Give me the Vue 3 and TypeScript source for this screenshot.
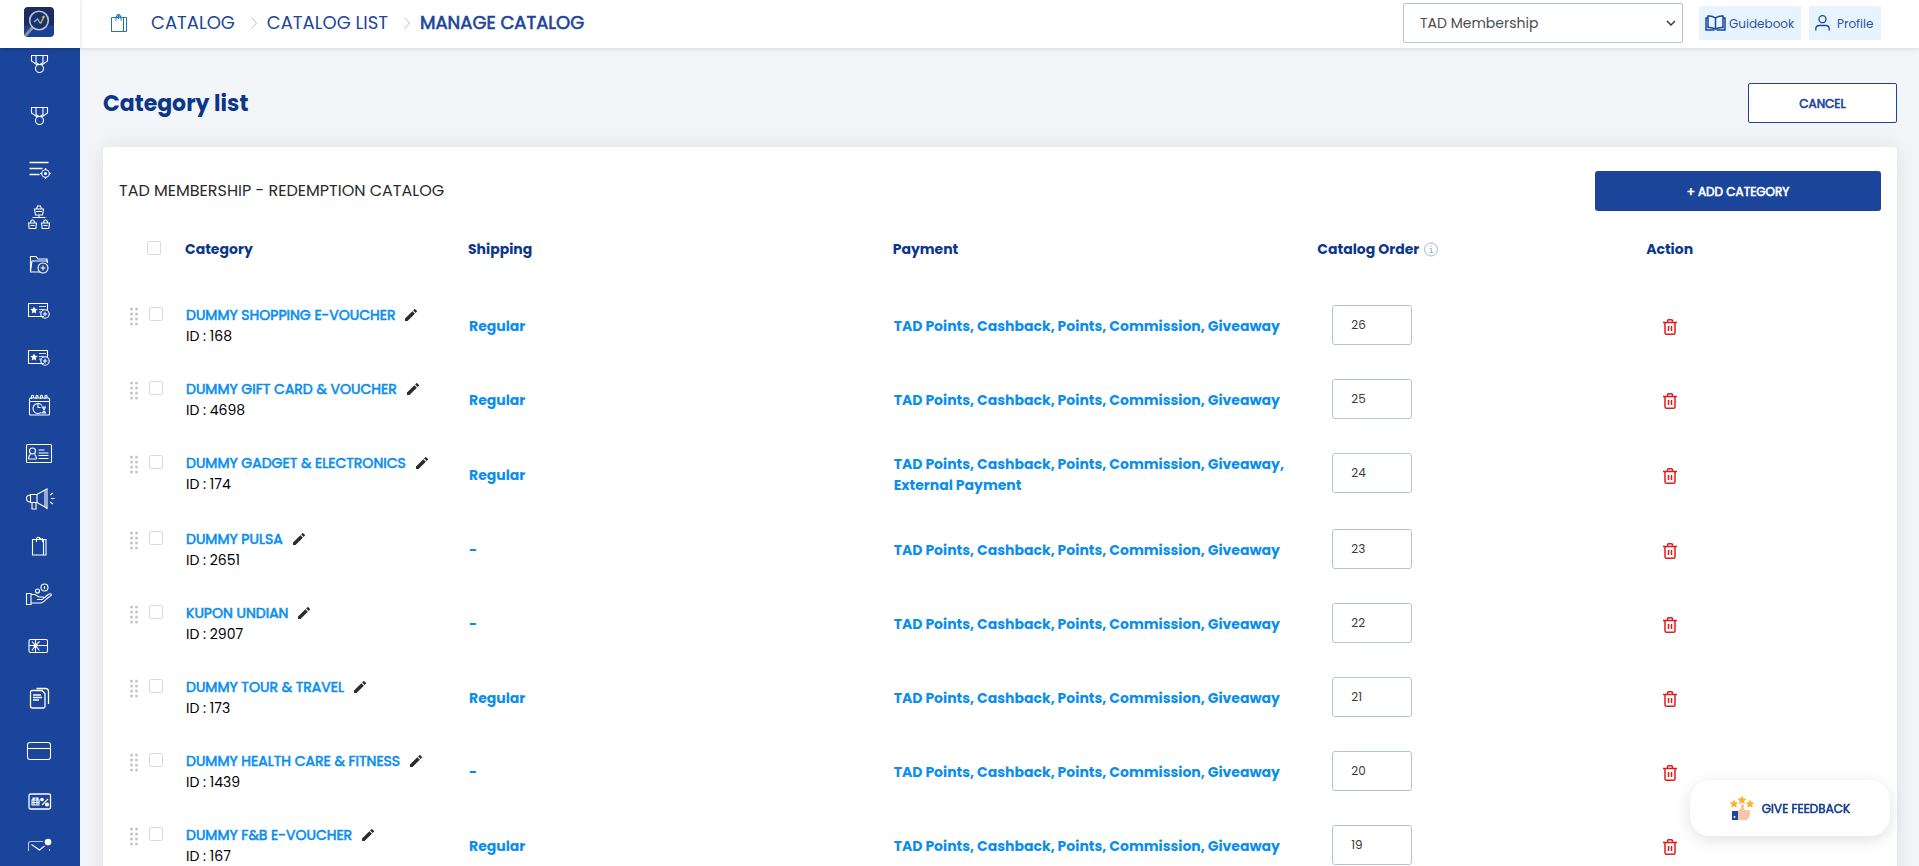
<script setup lang="ts">
import { ref } from 'vue'

interface Category {
  id: number
  name: string
  shipping: string
  payment: string
  order: number
}

const base = 'TAD Points, Cashback, Points, Commission, Giveaway'

const categories = ref<Category[]>([
  { id: 168, name: 'DUMMY SHOPPING E-VOUCHER', shipping: 'Regular', payment: base, order: 26 },
  { id: 4698, name: 'DUMMY GIFT CARD & VOUCHER', shipping: 'Regular', payment: base, order: 25 },
  { id: 174, name: 'DUMMY GADGET & ELECTRONICS', shipping: 'Regular', payment: base + ', External Payment', order: 24 },
  { id: 2651, name: 'DUMMY PULSA', shipping: '-', payment: base, order: 23 },
  { id: 2907, name: 'KUPON UNDIAN', shipping: '-', payment: base, order: 22 },
  { id: 173, name: 'DUMMY TOUR & TRAVEL', shipping: 'Regular', payment: base, order: 21 },
  { id: 1439, name: 'DUMMY HEALTH CARE & FITNESS', shipping: '-', payment: base, order: 20 },
  { id: 167, name: 'DUMMY F&B E-VOUCHER', shipping: 'Regular', payment: base, order: 19 },
])

const program = ref('TAD Membership')

interface MenuItem {
  label: string
  icon: string
}

const medal = '<path d="M7.500 7.500h16v5.500l-5 3.500h-6l-5-3.500zM12 8v6.500l3 2M19 8v6.500l-3 2"/><circle cx="15.500" cy="20.500" r="4"/>'
const voucher = '<path d="M20 20.500H4.500v-13h19v7"/><path d="M15 10.500h7M15 13.500h5M15 16h3" opacity=".8"/><path fill="currentColor" stroke="none" d="M10 10.500l1.100 2.300 2.500.3-1.800 1.800.4 2.500-2.200-1.200-2.200 1.200.4-2.500-1.800-1.800 2.500-.3z"/><circle cx="21" cy="18" r="4.200"/><path d="M21 15.800v4.400M18.800 18h4.400"/>'

const menu: MenuItem[][] = [
  [
    { label: 'Membership', icon: medal },
    { label: 'Rewards', icon: medal },
    { label: 'Rules', icon: '<path d="M5.500 10.500h19M5.500 16.500h13M5.500 22.500h10" stroke-width="1.400"/><circle cx="21.500" cy="21.500" r="3.800"/><circle cx="21.500" cy="21.500" r="1" fill="currentColor"/><path d="M21.500 16v2M21.500 25v2M16 21.500h2M25 21.500h2"/>' },
  ],
  [
    { label: 'Merchant network', icon: '<path d="M10.500 7h9l-1 6h-7zM12.500 7l1-3h3l1 3M12 9.500h6M15 13v3M8.500 15.500h13"/><path d="M4.500 21h8l-.7 5.500H5.200zM6.500 21q0-3 2-3t2 3M6.500 23.500h4"/><path d="M17.500 21h8l-.7 5.500h-6.600zM19.500 21q0-3 2-3t2 3M19.500 23.500h4"/>' },
    { label: 'Folders', icon: '<path d="M23 13.500V10h-9l-2-2.500H6.500v15.500h10M6.500 22.500l1.500-10.500h15.500v2"/><circle cx="19" cy="19" r="5"/><path d="M19 16.500v5M16.500 19h5"/>' },
    { label: 'Add voucher', icon: voucher },
    { label: 'Add coupon', icon: voucher },
    { label: 'Schedule', icon: '<rect x="5.500" y="8" width="20" height="17" rx="1"/><path d="M5.500 11.500h20M7.500 9V6q1-1.500 2 0v2M12 9V6q1-1.500 2 0v2M16.500 9V6q1-1.500 2 0v2M21 9V6q1-1.500 2 0v2"/><path d="M18 15.500a5 5 0 1 0-1 7M14 14v3.500h2.500M17.500 17h4.500M17.500 23h4.500M18.500 17l3 6M21.500 17l-3 6"/>' },
    { label: 'Member card', icon: '<rect x="2.500" y="7.500" width="25" height="18" rx="1"/><circle cx="8.500" cy="14" r="3"/><path d="M4.500 22q.5-4 2-4.500M12.500 22q-.5-4-2-4.500M4.500 22h8M14.500 13h6M14.500 16h10M14.500 18.500h10M14.500 21.500h10"/>' },
    { label: 'Campaigns', icon: '<path d="M6.500 10.500h6.500L21 6v17l-8-4.500H6.500zM6.500 11q-4 0-4 3.500t4 3.500M13 10.500v8M8 18.500V25h4v-6.500M21 6l2-1v19.500l-2-1.500M26 11l3-2M27 14.500h3.500M26 18l3 2"/>' },
    { label: 'Catalog', icon: '<path d="M8.500 8.500h13.500v15.500H8.500zM19.500 9v15"/><path d="M12.500 11V8q1-3 3-1t3 1v3M15.500 6v3"/>' },
    { label: 'Donations', icon: '<path d="M2.500 15.500h4.500v11H2.500zM7 16.500h4l4 2.500h4q1.500 1.500-1 2.500h-5M7 25h10q3-1 5.500-4l5-4q-.5-2.500-4 0l-3.500 3"/><circle cx="13.500" cy="13" r="2"/><circle cx="20.500" cy="9.500" r="3.500"/><path d="M20.500 8v3"/>' },
  ],
  [
    { label: 'Gift cards', icon: '<rect x="5" y="9.500" width="18.500" height="13" rx="1.500"/><path d="M5 15.500h18.500M11.500 9.500v13M11.500 15.500l-3.500-4M11.500 15.500l4-4M11.500 15.500l-3.500 5M11.500 15.500l4 5"/><circle cx="11.500" cy="15.500" r="1.500" fill="currentColor"/>' },
    { label: 'Articles', icon: '<path d="M8 8.500h10l3 3v13q0 1.500-1.500 1.500h-11q-2 0-2-2v-14q0-1.500 1.500-1.500zM12.500 6.500h9q3 0 3 3V22M9 13h8M9 15.500h9M9 18h6" stroke-width="1.300"/>' },
    { label: 'Cards', icon: '<rect x="3.500" y="8.500" width="23" height="17" rx="2.500"/><path d="M3.500 14.500h23"/>' },
    { label: 'Discounts', icon: '<rect x="5" y="8" width="21.500" height="15" rx="1.500" stroke-width="1.300"/><path d="M8 14h7v5H8zM9 14v-2h5v2M8 16.500h7M10 12v7M13 12v7M18 19l6-6"/><circle cx="18" cy="13.500" r="1.300" fill="currentColor"/><circle cx="23" cy="18.500" r="1.500" fill="currentColor"/>' },
    { label: 'Messages', icon: '<path d="M4.500 18V5.500q0-2 2-2H19M25.500 11v8" opacity=".7"/><path d="M7.500 6.500l8 5.500 5-4"/><circle cx="24" cy="4" r="2.800" fill="currentColor"/>' },
  ],
]
</script>

<template>
  <div class="shell">
    <header class="topbar">
      <a class="logo" href="#" aria-label="Home">
        <svg width="30" height="30" viewBox="0 0 30 30">
          <defs>
            <linearGradient id="logo-fill" x1="0" y1="0" x2="0" y2="1">
              <stop offset=".6" stop-color="#1b2c60" />
              <stop offset=".65" stop-color="#1b4193" />
            </linearGradient>
          </defs>
          <rect width="30" height="30" rx="4" fill="url(#logo-fill)" />
          <path d="M8.500 20.500 2 28" stroke="#8a8f9c" stroke-width="3" stroke-linecap="round" />
          <circle cx="15" cy="13.500" r="9.300" fill="#1c3168" stroke="#b9c4e2" stroke-width="1.600" />
          <path d="m10 15 3.500-3 3 4.500" fill="none" stroke="#7fc0ef" stroke-width="1.300" />
          <path d="m16.500 16.500 3-6" stroke="#f3c63f" stroke-width="1.300" />
          <circle cx="19.500" cy="10" r="1.200" fill="#f3c63f" />
        </svg>
      </a>
      <nav class="crumbs" aria-label="Breadcrumb">
        <svg class="crumb-bag" width="16" height="18" viewBox="0 0 16 18" fill="none" stroke="#1c74bf">
          <path d="M.5 3.500h15v14H.5zM12.500 4v13.500M5 6.500V3l1-1h3l1 1v3.500M5 3l1.500-2.500h2L10 3M7.500 1v4" />
        </svg>
        <a href="#">CATALOG</a>
        <svg class="crumb-sep" width="6" height="12" viewBox="0 0 6 12" fill="none" stroke="#b9bec8"><path d="m.5.500 5 5.500-5 5.500" /></svg>
        <a href="#">CATALOG LIST</a>
        <svg class="crumb-sep" width="6" height="12" viewBox="0 0 6 12" fill="none" stroke="#b9bec8"><path d="m.5.500 5 5.500-5 5.500" /></svg>
        <a href="#" class="current" aria-current="page">MANAGE CATALOG</a>
      </nav>
      <div class="tools">
        <div class="program">
          <select v-model="program" aria-label="Program">
            <option>TAD Membership</option>
          </select>
          <svg width="10" height="6" viewBox="0 0 10 6" fill="none" stroke="#333" stroke-width="1.400"><path d="m1 1 4 4 4-4" /></svg>
        </div>
        <a class="tool" href="#">
          <svg width="21" height="16" viewBox="0 0 21 16" fill="none" stroke="#1a459b" stroke-width="1.500">
            <path d="M10.500 3v10.500M10.500 3Q7 .5 3 1v11.500q4-.5 7.500 1.500 3.500-2 7.500-1.500V1q-4-.5-7.500 2z" />
            <path d="M3 3H1v12h8.500M18 3h2v12h-8.500" />
          </svg>
          <span>Guidebook</span>
        </a>
        <a class="tool profile" href="#">
          <svg width="15" height="16" viewBox="0 0 15 16" fill="none" stroke="#1a459b" stroke-width="1.300">
            <circle cx="7.500" cy="4.200" r="3.500" />
            <path d="M.8 15.500V14q0-3.500 3.500-3.500h6.400q3.500 0 3.500 3.500v1.500" />
          </svg>
          <span>Profile</span>
        </a>
      </div>
    </header>

    <div class="body">
      <nav class="sidebar" aria-label="Main">
        <div class="menu">
          <div v-for="(group, g) in menu" :key="g" class="group" :class="{ compact: g === 1, last: g === 2 }">
            <a v-for="item in group" :key="item.label" class="item" href="#" :aria-label="item.label">
              <svg width="32" height="32" viewBox="0 0 32 32" fill="none" stroke="currentColor" stroke-width="1.100" v-html="item.icon" />
            </a>
          </div>
        </div>
      </nav>

      <main class="content">
        <div class="page-head">
          <h1>Category list</h1>
          <button type="button" class="cancel">CANCEL</button>
        </div>

        <section class="card">
          <div class="card-head">
            <h2>TAD MEMBERSHIP - REDEMPTION CATALOG</h2>
            <button type="button" class="add">+ ADD CATEGORY</button>
          </div>

          <table>
            <colgroup>
              <col class="c-pick" />
              <col class="c-name" />
              <col class="c-wide" />
              <col class="c-wide" />
              <col class="c-order" />
              <col />
            </colgroup>
            <thead>
              <tr>
                <th class="pick-all"><input type="checkbox" aria-label="Select all categories" /></th>
                <th>Category</th>
                <th>Shipping</th>
                <th>Payment</th>
                <th>
                  <span class="with-info">
                    Catalog Order
                    <svg width="14" height="15" viewBox="0 0 14 15" fill="none" stroke="#a9b6dd">
                      <circle cx="7" cy="7.500" r="6.500" />
                      <path d="M5.500 6.500h2v4M5.500 10.500h4M7 3.500v1.500" />
                    </svg>
                  </span>
                </th>
                <th class="action">Action</th>
              </tr>
            </thead>
            <tbody>
              <tr v-for="c in categories" :key="c.id">
                <td class="top">
                  <div class="pick">
                    <svg width="8" height="19" viewBox="0 0 8 19" fill="#c6c6c8">
                      <template v-for="y in [2, 7, 12, 17]" :key="y">
                        <circle cx="1.500" :cy="y" r="1.500" />
                        <circle cx="6.500" :cy="y" r="1.500" />
                      </template>
                    </svg>
                    <input type="checkbox" :aria-label="'Select ' + c.name" />
                  </div>
                </td>
                <td class="top">
                  <div class="name">
                    <a href="#">{{ c.name }}</a>
                    <button type="button" class="icon edit" :aria-label="'Edit ' + c.name">
                      <svg width="16" height="16" viewBox="0 0 24 24" fill="#2c2c2e">
                        <path d="M3 17.250V21h3.750L17.810 9.940l-3.750-3.750zM20.710 7.040a1 1 0 0 0 0-1.410l-2.340-2.340a1 1 0 0 0-1.410 0l-1.830 1.830 3.750 3.750z" />
                      </svg>
                    </button>
                  </div>
                  <div class="ident">ID : {{ c.id }}</div>
                </td>
                <td class="value">{{ c.shipping }}</td>
                <td class="value">{{ c.payment }}</td>
                <td class="top order"><input v-model="c.order" type="text" :aria-label="'Catalog order of ' + c.name" /></td>
                <td class="action">
                  <button type="button" class="icon" :aria-label="'Delete ' + c.name">
                    <svg width="14" height="16" viewBox="0 0 14 16" fill="none" stroke="#e01b1b" stroke-width="1.500">
                      <path d="M0 3.500h14M2 3.500v10.200q0 1.600 1.600 1.600h6.800q1.600 0 1.600-1.600V3.500M4.500 3.500V2q0-1.300 1.300-1.300h2.400Q9.500.7 9.500 2v1.500M5.500 7v5M8.500 7v5" />
                    </svg>
                  </button>
                </td>
              </tr>
            </tbody>
          </table>
        </section>
      </main>
    </div>

    <button type="button" class="feedback">
      <svg width="24" height="24" viewBox="0 0 24 24">
        <path fill="#f6b52e" stroke="#f6b52e" stroke-width=".5" d="m12 0 1.200 2.500 2.800.4-2 2 .5 2.700-2.500-1.300-2.500 1.300.5-2.700-2-2 2.800-.4zM4 4l1.200 2.400 2.600.4-1.900 1.800.5 2.600L4 10l-2.400 1.200.5-2.600L.2 6.800l2.600-.4zM20 4l1.200 2.400 2.600.4-1.900 1.800.5 2.600L20 10l-2.400 1.200.5-2.600-1.900-1.800 2.600-.4z" />
        <path fill="#f6c7a6" d="M8 15l2.500-2.500.5-3.500q.5-1.500 2-.8 1.300.6 1.300 2.300V14h3.700q2.300 0 2.300 1.700 0 1-.6 1.500.6.700.3 1.600-.2.800-.8 1.100.3 1-.1 1.700-.3.600-.8.700 0 1.700-2 1.700H8z" />
        <path fill="#1d479d" d="M2 15h6v9H2z" />
        <circle cx="4.500" cy="21" r="1" fill="#fff" />
      </svg>
      GIVE FEEDBACK
    </button>
  </div>
</template>

<style>
body {
  margin: 0;
}
</style>

<style scoped>
.shell,
.shell * {
  box-sizing: border-box;
}
.shell {
  display: flex;
  flex-direction: column;
  height: 100vh;
  overflow: hidden;
  background: #f4f5f8;
  color: #111;
  font-family: Poppins, Inter, 'Liberation Sans', sans-serif;
  font-size: 14px;
  line-height: 21px;
}
a {
  color: inherit;
  text-decoration: none;
}
button,
input,
select {
  font: inherit;
}
button {
  padding: 0;
  cursor: pointer;
}
svg {
  flex: none;
  display: block;
}
.topbar {
  z-index: 2;
  display: flex;
  align-items: center;
  flex: none;
  height: 48px;
  background: #fff;
  box-shadow: 0 1px 5px rgba(0, 0, 0, 0.12);
}
.logo {
  display: flex;
  align-items: center;
  justify-content: center;
  width: 80px;
  height: 48px;
  padding: 0 2px 4px 0;
  box-shadow: 1px 0 3px rgba(0, 0, 0, 0.1);
}
.crumbs {
  display: flex;
  align-items: center;
  padding-bottom: 3px;
  padding-left: 31px;
  color: #1a459b;
  font-size: 18px;
  font-weight: 400;
}
.crumb-bag {
  margin-right: 24px;
}
.crumb-sep {
  margin: 0 10px 0 16px;
}
.current,
.name a,
.cancel,
.add,
.feedback {
  font-weight: 400;
  -webkit-text-stroke: 0.6px currentColor;
}
.tools {
  display: flex;
  align-items: center;
  gap: 8px;
  margin-left: auto;
  padding-right: 38px;
  padding-bottom: 2px;
}
.program {
  position: relative;
  width: 280px;
  margin-right: 8px;
}
.program select {
  display: block;
  width: 100%;
  height: 40px;
  padding: 0 16px;
  border: 1px solid #b8c3d1;
  border-radius: 2px;
  appearance: none;
  background: #fff;
  color: #4c4c4e;
  font-size: 14px;
}
.program svg {
  position: absolute;
  top: 17px;
  right: 7px;
  pointer-events: none;
}
.tool {
  display: flex;
  align-items: center;
  gap: 3px;
  height: 34px;
  min-width: 102px;
  padding: 0 6px;
  background: #e7f4ff;
  color: #2c55a5;
  font-size: 12px;
}
.profile {
  gap: 7px;
  min-width: 72px;
}
.body {
  display: flex;
  flex: 1;
  min-height: 0;
}
.sidebar {
  flex: none;
  width: 80px;
  padding-bottom: 15px;
  background: #1a459b;
  color: #fff;
}
.menu {
  height: 100%;
  overflow: hidden;
}
.group:first-child {
  margin-top: -10px;
}
.item {
  display: flex;
  align-items: center;
  height: 52px;
  padding-left: 24px;
}
.compact .item {
  height: 47px;
}
.last {
  padding-top: 3px;
}
.content {
  flex: 1;
  min-width: 0;
  padding: 35px 22px 32px 23px;
  overflow: auto;
  scrollbar-width: none;
}
.page-head,
.card-head {
  display: flex;
  align-items: center;
  justify-content: space-between;
}
h1 {
  margin: 0;
  color: #0b3789;
  font-size: 22px;
  font-weight: 700;
}
.cancel {
  width: 149px;
  height: 40px;
  border: 1px solid #1a459b;
  border-radius: 2px;
  background: #fff;
  color: #1a459b;
  font-size: 12px;
}
.card {
  margin-top: 24px;
  padding: 24px 16px;
  border-radius: 4px;
  background: #fff;
  box-shadow: 0 0 24px rgba(0, 0, 0, 0.09);
}
h2 {
  margin: 0;
  padding-bottom: 2px;
  color: #2a2a2c;
  font-size: 16px;
  font-weight: 400;
}
.add {
  width: 286px;
  height: 40px;
  border: 0;
  border-radius: 3px;
  background: #1a459b;
  color: #fff;
  font-size: 12px;
}
table {
  width: 100%;
  border-collapse: collapse;
  table-layout: fixed;
}
.c-pick {
  width: 66px;
}
.c-name {
  width: 283px;
}
.c-wide {
  width: 24.1%;
}
.c-order {
  width: 8%;
}
th {
  height: 77px;
  padding: 0;
  color: #0b3789;
  font-weight: 700;
  text-align: left;
  white-space: nowrap;
}
td {
  height: 74px;
  padding: 17px 0 15px 1px;
  vertical-align: middle;
}
td.top {
  vertical-align: top;
}
input[type='checkbox'] {
  display: block;
  flex: none;
  width: 14px;
  height: 14px;
  margin: 0;
  border: 1px solid #d9dbe4;
  border-radius: 2px;
  appearance: none;
  background: #fff;
}
.pick-all {
  padding: 0 0 3px 28px;
}
.with-info {
  display: flex;
  align-items: center;
  gap: 5px;
}
.pick {
  display: flex;
  gap: 11px;
  padding: 2px 0 0 10px;
}
.name {
  display: flex;
  align-items: center;
  gap: 8px;
  color: #0a8eee;
  white-space: nowrap;
}
.icon {
  border: 0;
  background: none;
}
.edit {
  padding-bottom: 2px;
}
.ident {
  color: #000;
}
td.value {
  padding: 18px 0 16px 1px;
  color: #0a8eee;
  font-weight: 700;
}
.order input {
  display: block;
  width: 80px;
  height: 40px;
  margin-left: 14px;
  padding: 0 18px;
  border: 1px solid #b8c3d1;
  border-radius: 3px;
  background: #fff;
  color: #3a3a3c;
  font-size: 12px;
}
.action {
  text-align: center;
}
td.action {
  padding-left: 0;
}
td.action .icon {
  vertical-align: middle;
}
.feedback {
  position: fixed;
  right: 29px;
  bottom: 30px;
  z-index: 3;
  display: flex;
  align-items: center;
  justify-content: center;
  gap: 8px;
  width: 200px;
  height: 56px;
  border: 0;
  border-radius: 20px;
  background: #fff;
  box-shadow: 0 4px 16px rgba(0, 0, 0, 0.12);
  color: #1a3f8f;
  font-size: 12px;
}
</style>
